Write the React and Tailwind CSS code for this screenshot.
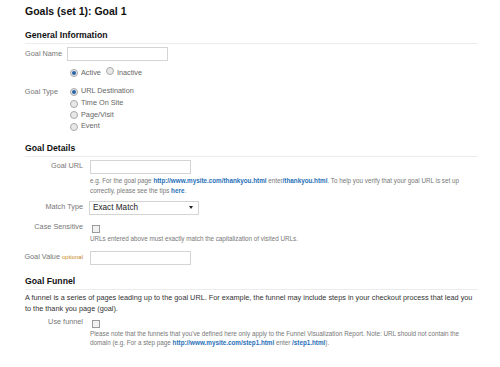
import React from 'react';

const Radio = ({ checked }) => (
    <span className="inline-flex w-[8px] h-[8px] rounded-full border border-[#a9a9a9] bg-[#e8e8e8] items-center justify-center shrink-0">
        {checked && <span className="w-[4px] h-[4px] rounded-full bg-[#2a64a8]"></span>}
    </span>
);

const Checkbox = () => (
    <span className="inline-block w-[8px] h-[8px] border border-[#9a9a9a] bg-[#f2f2f2] shrink-0"></span>
);

const TextInput = ({ w = 'w-[101px]' }) => (
    <div className={`${w} h-[14px] border border-[#d4d4d4] bg-white`}></div>
);

const Heading = ({ children, className = '' }) => (
    <div className={`ml-[25px] mr-[22px] h-[16px] border-b border-[#ececec] text-[8.7px] font-bold leading-[15px] text-[#111] ${className}`}>
        {children}
    </div>
);

const Link = ({ children }) => <span className="text-[#1f6fb8] font-bold">{children}</span>;

export default function App() {
    return (
        <div className="w-[500px] h-[367px] bg-white overflow-hidden" style={{ fontFamily: '"Liberation Sans", Arial, sans-serif' }}>
            {/* title */}
            <div className="h-[28px] pt-[5px] pl-[25px] text-[10.5px] font-bold leading-[12px] text-[#111]">Goals (set 1): Goal 1</div>

            <Heading>General Information</Heading>

            {/* goal name */}
            <div className="mt-[3px] flex items-center">
                <div className="w-[62px] text-right text-[7.3px] text-[#777]">Goal Name</div>
                <div className="ml-[5px]"><TextInput /></div>
            </div>

            {/* active / inactive */}
            <div className="mt-[6px] h-[12px] flex items-center pl-[70px] gap-[3px] text-[7.3px] text-[#666]">
                <Radio checked />
                <span>Active</span>
                <span className="ml-[2px]"><Radio /></span>
                <span>Inactive</span>
            </div>

            {/* goal type */}
            <div className="mt-[7px] flex">
                <div className="w-[58px] h-[12px] leading-[12px] text-right text-[7.3px] text-[#777]">Goal Type</div>
                <div className="ml-[12px] flex flex-col text-[7.3px] text-[#666]">
                    {[['URL Destination', true], ['Time On Site'], ['Page/Visit'], ['Event']].map(([t, c]) => (
                        <div key={t} className="h-[11.7px] flex items-center gap-[3px]">
                            <Radio checked={c} />
                            <span>{t}</span>
                        </div>
                    ))}
                </div>
            </div>

            <Heading className="mt-[8px]">Goal Details</Heading>

            {/* goal url */}
            <div className="mt-[3px] flex items-center">
                <div className="w-[83px] text-right text-[7.3px] text-[#777]">Goal URL</div>
                <div className="ml-[7px]"><TextInput /></div>
            </div>
            <div className="mt-[2px] ml-[90px] mr-[22px] text-[6.3px] leading-[10px] text-[#777]">
                e.g. For the goal page <Link>http://www.mysite.com/thankyou.html</Link> enter<Link>/thankyou.html</Link>. To help you verify that your goal URL is set up correctly, please see the tips <Link>here</Link>.
            </div>

            {/* match type */}
            <div className="mt-[5px] flex items-center">
                <div className="w-[83px] text-right text-[7.3px] text-[#777]">Match Type</div>
                <div className="ml-[6px] w-[110px] h-[14px] border border-[#d4d4d4] bg-white flex items-center justify-between pl-[3px] pr-[5px]">
                    <span className="text-[8.2px] text-[#222]">Exact Match</span>
                    <span className="w-0 h-0 border-l-[2.5px] border-r-[2.5px] border-t-[3px] border-l-transparent border-r-transparent border-t-[#222]"></span>
                </div>
            </div>

            {/* case sensitive */}
            <div className="mt-[7px] h-[12px] flex items-center">
                <div className="w-[83px] text-right text-[7.3px] text-[#777]">Case Sensitive</div>
                <div className="ml-[9px]"><Checkbox /></div>
            </div>
            <div className="ml-[90px] text-[6.3px] leading-[10px] text-[#777]">
                URLs entered above must exactly match the capitalization of visited URLs.
            </div>

            {/* goal value */}
            <div className="mt-[7px] flex items-center">
                <div className="w-[83px] text-right text-[7.3px] text-[#777]">
                    Goal Value <span className="text-[6px] text-[#c8872a]">optional</span>
                </div>
                <div className="ml-[7px]"><TextInput /></div>
            </div>

            <Heading className="mt-[9px]">Goal Funnel</Heading>

            <div className="mt-[2px] ml-[25px] mr-[20px] text-[7.3px] leading-[11px] text-[#333]">
                A funnel is a series of pages leading up to the goal URL. For example, the funnel may include steps in your checkout process that lead you to the thank you page (goal).
            </div>

            {/* use funnel */}
            <div className="mt-[3px] h-[12px] flex items-center">
                <div className="w-[83px] text-right text-[7.3px] text-[#777]">Use funnel</div>
                <div className="ml-[9px]"><Checkbox /></div>
            </div>
            <div className="ml-[90px] mr-[20px] text-[6.3px] leading-[9.5px] text-[#777]">
                Please note that the funnels that you've defined here only apply to the Funnel Visualization Report. Note: URL should not contain the domain (e.g. For a step page <Link>http://www.mysite.com/step1.html</Link> enter <Link>/step1.html</Link>).
            </div>
        </div>
    );
}
